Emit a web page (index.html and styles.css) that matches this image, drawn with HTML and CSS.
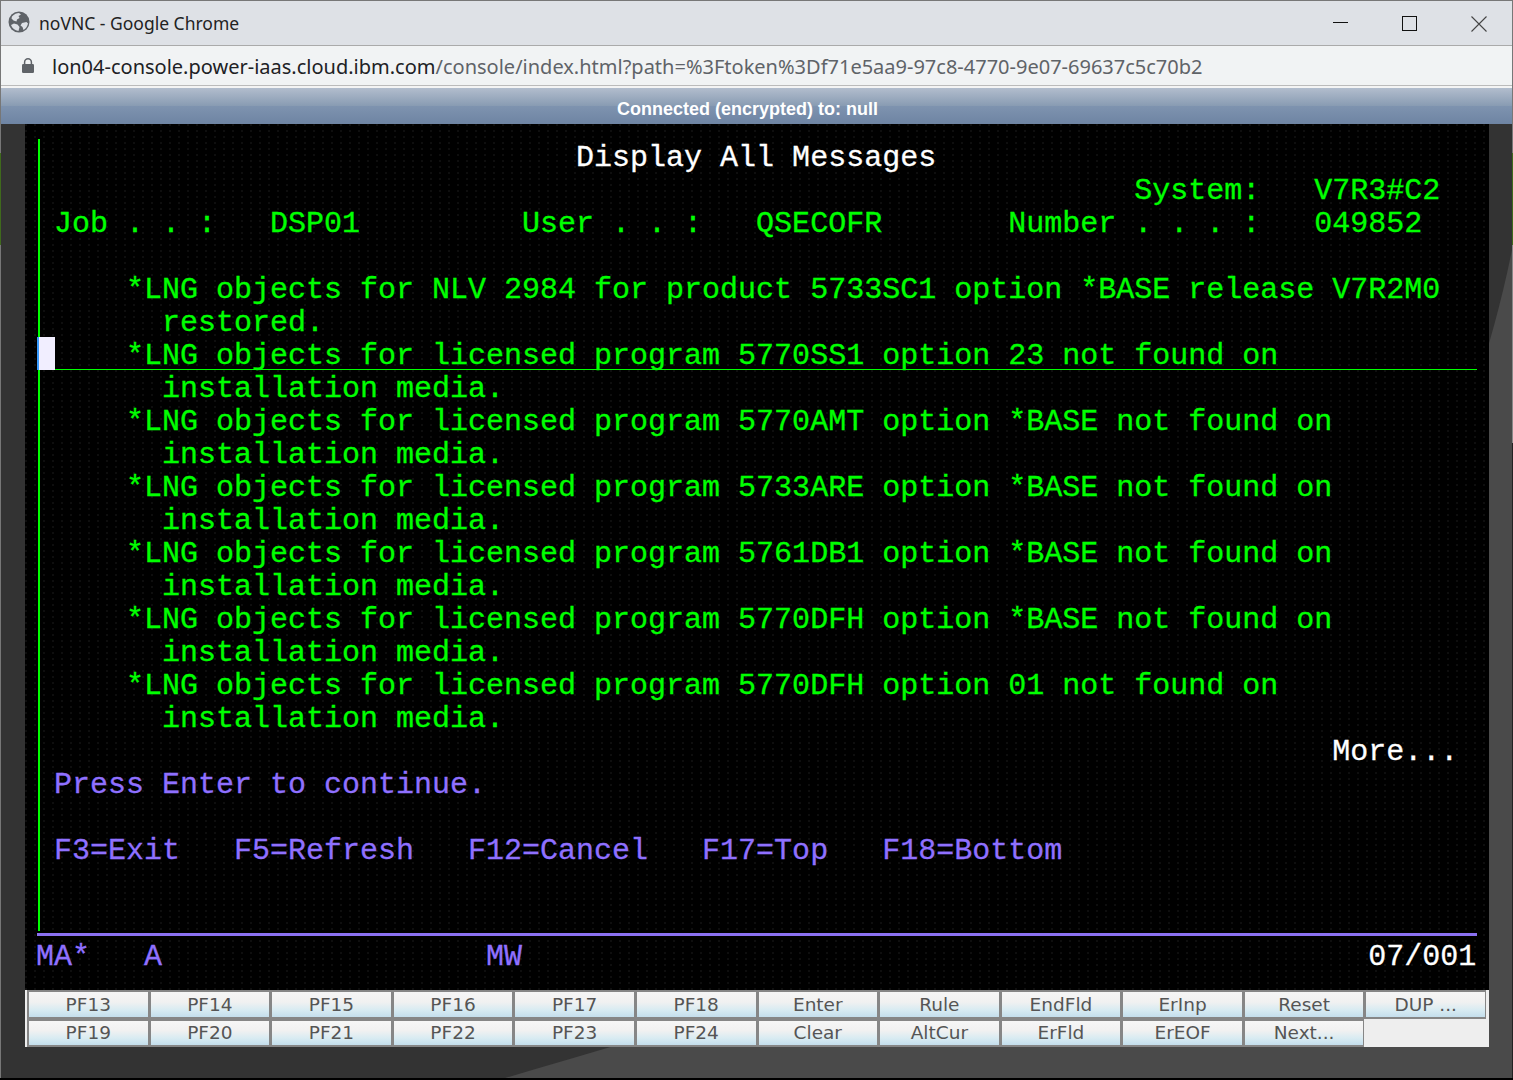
FILE: index.html
```html
<!DOCTYPE html>
<html lang="en">
<head>
<meta charset="utf-8">
<title>noVNC - Google Chrome</title>
<link rel="stylesheet" href="styles.css">
</head>
<body>
<div class="window">
  <header class="titlebar">
    <svg class="globe" viewBox="0 0 22 22" width="22" height="22">
      <circle cx="11" cy="11" r="10.5" fill="#5f6368"/>
      <path d="M4 5.5 C6 3 9 2 11 2 L13 3.5 L10.5 5 L11.5 7 L9 8.5 L8.5 10.5 L5.5 9.5 L3.5 7.5 Z M14 12 L18.5 11 L20 12.5 C19.5 15 18 17.5 15.5 19 L14.5 16 L12.5 14.5 Z M6 12.5 L9.5 13.5 L11.5 16 L10.5 20 C7 19.5 4 17 3 14 Z" fill="#dee1e6"/>
    </svg>
    <span class="title">noVNC - Google Chrome</span>
    <div class="controls">
      <svg class="ctl" viewBox="0 0 16 16" width="16" height="16"><path d="M0 6.5H15" stroke="#111" stroke-width="1"/></svg>
      <svg class="ctl" viewBox="0 0 16 16" width="16" height="16"><rect x=".5" y=".5" width="14" height="14" fill="none" stroke="#111"/></svg>
      <svg class="ctl" viewBox="0 0 16 16" width="16" height="16"><path d="M.5 .5L15.5 15.5M15.5 .5L.5 15.5" stroke="#444" stroke-width="1.1"/></svg>
    </div>
  </header>
  <div class="addressbar">
    <svg class="lock" viewBox="0 0 12 15" width="12" height="15">
      <path d="M2.6 6V4.2a3.4 3.4 0 0 1 6.8 0V6" fill="none" stroke="#5f6368" stroke-width="1.5"/>
      <rect x="0" y="6" width="12" height="9" rx="1.2" fill="#5f6368"/>
    </svg>
    <span class="url"><span class="host">lon04-console.power-iaas.cloud.ibm.com</span>/console/index.html?path=%3Ftoken%3Df71e5aa9-97c8-4770-9e07-69637c5c70b2</span>
  </div>
  <div class="status">Connected (encrypted) to: null</div>
  <main class="desktop">
    <svg class="swoosh" viewBox="0 0 1513 954" width="1513" height="954">
      <path d="M505 954 C1005 809 1403 671 1513 121 V954 H505 Z" fill="#4a4a4a"/>
    </svg>
    <div class="canvas">
      <div class="screen">
        <div class="gutter"></div>
        <div class="crosshair"></div>
        <div class="cursor"></div>
        <div class="row white">                              Display All Messages</div>
        <div class="row">                                                             System:   V7R3#C2</div>
        <div class="row"> Job . . :   DSP01         User . . :   QSECOFR       Number . . . :   049852</div>
        <div class="row"></div>
        <div class="row">     *LNG objects for NLV 2984 for product 5733SC1 option *BASE release V7R2M0</div>
        <div class="row">       restored.</div>
        <div class="row">     *LNG objects for licensed program 5770SS1 option 23 not found on</div>
        <div class="row">       installation media.</div>
        <div class="row">     *LNG objects for licensed program 5770AMT option *BASE not found on</div>
        <div class="row">       installation media.</div>
        <div class="row">     *LNG objects for licensed program 5733ARE option *BASE not found on</div>
        <div class="row">       installation media.</div>
        <div class="row">     *LNG objects for licensed program 5761DB1 option *BASE not found on</div>
        <div class="row">       installation media.</div>
        <div class="row">     *LNG objects for licensed program 5770DFH option *BASE not found on</div>
        <div class="row">       installation media.</div>
        <div class="row">     *LNG objects for licensed program 5770DFH option 01 not found on</div>
        <div class="row">       installation media.</div>
        <div class="row white">                                                                        More...</div>
        <div class="row blue"> Press Enter to continue.</div>
        <div class="row"></div>
        <div class="row blue"> F3=Exit   F5=Refresh   F12=Cancel   F17=Top   F18=Bottom</div>
      </div>
      <div class="statusline">
        <div class="row blue">MA*   A                  MW<span class="white">                                               07/001</span></div>
      </div>
      <div class="keys">
        <button class="key">PF13</button><button class="key">PF14</button><button class="key">PF15</button><button class="key">PF16</button><button class="key">PF17</button><button class="key">PF18</button><button class="key">Enter</button><button class="key">Rule</button><button class="key">EndFld</button><button class="key">ErInp</button><button class="key">Reset</button><button class="key">DUP ...</button>
        <button class="key">PF19</button><button class="key">PF20</button><button class="key">PF21</button><button class="key">PF22</button><button class="key">PF23</button><button class="key">PF24</button><button class="key">Clear</button><button class="key">AltCur</button><button class="key">ErFld</button><button class="key">ErEOF</button><button class="key">Next...</button>
      </div>
    </div>
  </main>
  <div class="edge edge-left"></div>
  <div class="edge edge-right"></div>
</div>
</body>
</html>
```
FILE: styles.css
```css
* { box-sizing: border-box; }
html, body { margin: 0; padding: 0; }
body { width: 1513px; height: 1080px; overflow: hidden; background: #000; }

.window {
  position: relative;
  width: 1513px;
  height: 1078px;
  display: flex;
  flex-direction: column;
  background: #333;
  border-top: 1px solid #777;
}

.titlebar {
  height: 45px;
  flex: none;
  display: flex;
  align-items: center;
  padding-left: 8px;
  background: #dee1e6;
  border-bottom: 1px solid #aaa;
  font: 17.5px "Noto Sans", sans-serif;
  color: #222;
}
.globe { flex: none; margin-top: -2px; }
.title { margin-left: 9px; margin-top: -1px; }
.controls { margin-left: auto; display: flex; align-items: center; gap: 53px; padding-right: 26px; }
.ctl { display: block; margin-top: 2px; }

.addressbar {
  height: 40px;
  flex: none;
  display: flex;
  align-items: center;
  padding-left: 22px;
  background: #f1f3f4;
  border-bottom: 1px solid #bbb;
}
.lock { flex: none; }
.url {
  margin: 2px 0 0 18px;
  font: 20px "Noto Sans", sans-serif;
  color: #5f6368;
  white-space: nowrap;
}
.host { color: #202124; }

.status {
  height: 38px;
  flex: none;
  border-top: 2px solid #f4f4f4;
  padding: 3px 18px 0 0;
  text-align: center;
  font: bold 18px/36px "Liberation Sans", sans-serif;
  color: #fff;
  background: linear-gradient(#b2bdcd 0%, #899cb3 49%, #7e93af 51%, #6e84a3 100%);
}

.desktop {
  position: relative;
  flex: 1;
  padding-left: 25px;
  background: #333;
}
.swoosh { position: absolute; left: 0; top: 0; }

.canvas {
  position: relative;
  width: 1464px;
  height: 923px;
  background-color: #000;
  background-image: radial-gradient(circle at 1px 1px, #0e0e0e .8px, transparent 1.1px);
  background-size: 9px 6px;
  display: flex;
  flex-direction: column;
}

.screen {
  position: relative;
  height: 812px;
  flex: none;
  padding-top: 18px;
  border-bottom: 3px solid #8a70f0;
  margin: 0 12px;
}
.screen .row { margin-left: -1px; }
.gutter { position: absolute; left: 1px; top: 15px; width: 2px; height: 792px; background: #0f0; }
.crosshair { position: absolute; left: 1px; right: 0; top: 245px; height: 1px; background: #0f0; }
.cursor { position: absolute; left: 0; top: 213px; width: 18px; height: 33px; background: #f1eeff; border-left: 2px solid #3a9cff; }

.row {
  position: relative;
  height: 33px;
  font: 30px/33px "Liberation Mono", monospace;
  -webkit-text-stroke: .3px currentColor;
  white-space: pre;
  color: #0f0;
}
.white { color: #fff; }
.blue { color: #8f70ff; }
.blue .white { color: #fff; }

.statusline { padding: 5px 0 0 11px; height: 54px; flex: none; }

.keys {
  display: grid;
  grid-template-columns: repeat(12, 1fr);
  grid-template-rows: 29px 28px;
  width: 1464px;
  height: 57px;
  padding: 0 3px 0 2px;
  background: #eee;
  flex: none;
}
.key {
  padding: 0;
  border: 2px solid #868686;
  border-right-width: 1px;
  margin: 0;
  font: 18.5px/24px "DejaVu Sans", sans-serif;
  color: #555;
  background: linear-gradient(#f6f6f6 0%, #f1f1f1 40%, #d8ebf2 72%, #c4deec 100%);
}

.edge { position: absolute; top: 0; width: 1px; height: 100%; }
.edge-left { left: 0; background: linear-gradient(#777 152px, #3f6a1c 152px, #3f6a1c 244px, #777 244px); }
.edge-right { right: 0; background: linear-gradient(#777 152px, #3f6a1c 152px, #3f6a1c 244px, #888 244px, #888 442px, #222 442px); }
```
